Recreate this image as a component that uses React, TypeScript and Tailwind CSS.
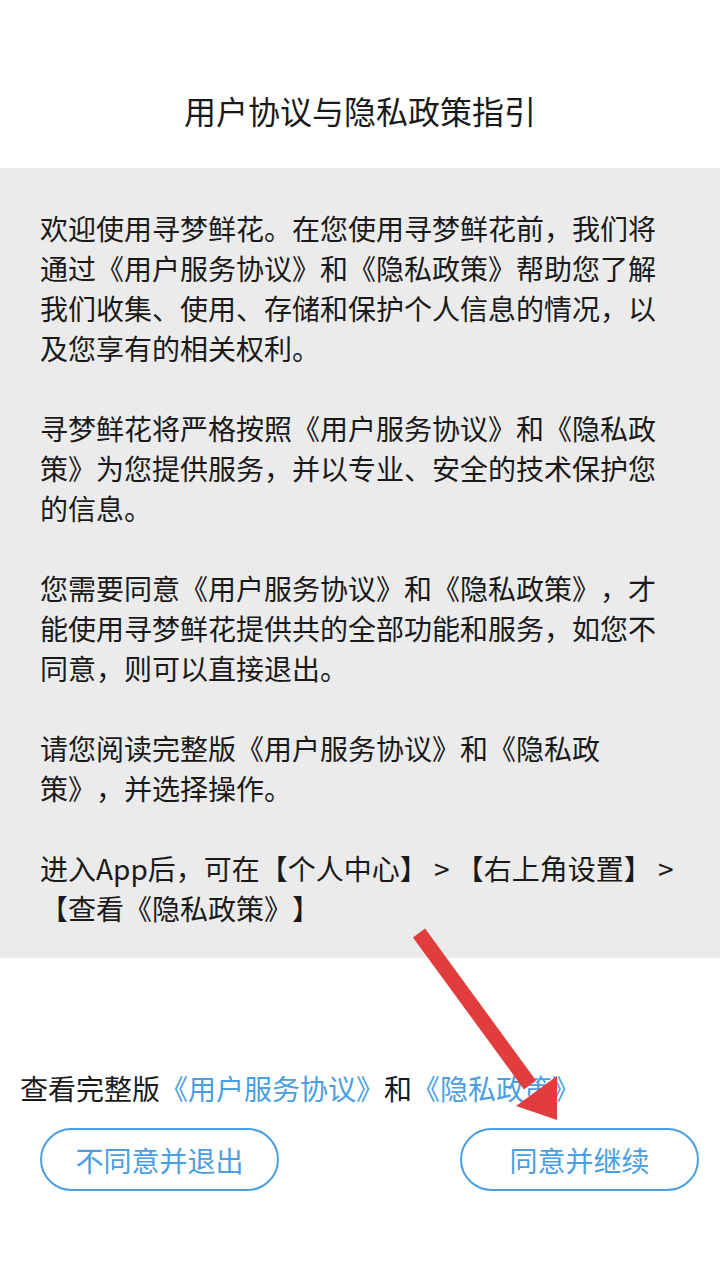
import React from 'react';

const paragraphs: string[] = [
    '欢迎使用寻梦鲜花。在您使用寻梦鲜花前，我们将通过《用户服务协议》和《隐私政策》帮助您了解我们收集、使用、存储和保护个人信息的情况，以及您享有的相关权利。',
    '寻梦鲜花将严格按照《用户服务协议》和《隐私政策》为您提供服务，并以专业、安全的技术保护您的信息。',
    '您需要同意《用户服务协议》和《隐私政策》，才能使用寻梦鲜花提供共的全部功能和服务，如您不同意，则可以直接退出。',
    '请您阅读完整版《用户服务协议》和《隐私政策》，并选择操作。',
    '进入App后，可在【个人中心】 > 【右上角设置】 > 【查看《隐私政策》】',
];

const App: React.FC = () => {
    return (
        <div
            className="relative w-[720px] h-[1280px] bg-white text-[#1a1a1a] overflow-hidden [text-spacing-trim:space-all]"
            style={{ fontFamily: '"Noto Sans CJK SC", "Noto Sans", sans-serif' }}
        >
            <div className="h-[168px] pt-[90px] text-center text-[32px] leading-[40px]">
                用户协议与隐私政策指引
            </div>

            <div className="bg-[#ebebeb] h-[790px] px-[40px] pt-[40px] text-[28px] leading-[40px] flex flex-col gap-[40px]">
                {paragraphs.map((p, i) => (
                    <p key={i}>{p}</p>
                ))}
            </div>

            <div className="pt-[110px] px-[20px] text-[28px] leading-[40px]">
                查看完整版<span className="text-[#4a9fe3]">《用户服务协议》</span>和<span className="text-[#4a9fe3]">《隐私政策》</span>
            </div>

            <div className="flex justify-between pl-[40px] pt-[20px] pr-[21px]">
                <button className="w-[239px] h-[63px] rounded-full border-2 border-[#4a9fe3] text-[#4a9fe3] text-[28px]">
                    不同意并退出
                </button>
                <button className="w-[239px] h-[63px] rounded-full border-2 border-[#4a9fe3] text-[#4a9fe3] text-[28px]">
                    同意并继续
                </button>
            </div>

            {/* annotation arrow */}
            <svg className="absolute inset-0 pointer-events-none" width="720" height="1280" viewBox="0 0 720 1280">
                <line x1="419" y1="933" x2="530" y2="1085" stroke="#e23d3d" strokeWidth="15" />
                <polygon points="516,1106 557,1076 557,1120" fill="#e23d3d" />
            </svg>
        </div>
    );
};

export default App;
